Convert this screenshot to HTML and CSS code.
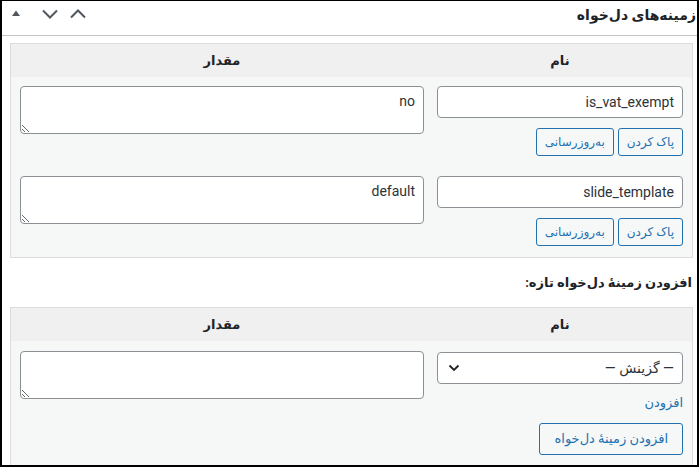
FILE: index.html
```html
<!DOCTYPE html>
<html lang="fa" dir="rtl">
<head>
<meta charset="utf-8">
<title>زمینه‌های دل‌خواه</title>
<link rel="stylesheet" href="styles.css">
</head>
<body>
<div class="postbox">
  <div class="postbox-header">
    <h2 class="hndle">زمینه‌های دل‌خواه</h2>
    <div class="handle-actions">
      <button class="handle-btn toggle" type="button" aria-label="toggle">
        <svg width="8" height="6" viewBox="0 0 8 6"><polygon points="0,6 4,0.5 8,6" fill="#50575e"/></svg>
      </button>
      <button class="handle-btn lower" type="button" aria-label="down">
        <svg width="16" height="10" viewBox="0 0 16 10"><polyline points="1,1.5 8,8.5 15,1.5" fill="none" stroke="#50575e" stroke-width="2"/></svg>
      </button>
      <button class="handle-btn higher" type="button" aria-label="up">
        <svg width="16" height="10" viewBox="0 0 16 10"><polyline points="1,8.5 8,1.5 15,8.5" fill="none" stroke="#50575e" stroke-width="2"/></svg>
      </button>
    </div>
  </div>

  <div class="inside">
    <div class="meta-table">
      <div class="meta-head">
        <div class="th">نام</div>
        <div class="th">مقدار</div>
      </div>
      <div class="meta-row">
        <div class="cell-name">
          <input class="text-input" type="text" value="is_vat_exempt">
          <div class="row-actions">
            <button class="btn" type="button">پاک کردن</button>
            <button class="btn" type="button">به‌روزرسانی</button>
          </div>
        </div>
        <div class="cell-value"><textarea class="textarea">no</textarea></div>
      </div>
      <div class="meta-row">
        <div class="cell-name">
          <input class="text-input" type="text" value="slide_template">
          <div class="row-actions">
            <button class="btn" type="button">پاک کردن</button>
            <button class="btn" type="button">به‌روزرسانی</button>
          </div>
        </div>
        <div class="cell-value"><textarea class="textarea">default</textarea></div>
      </div>
    </div>

    <p class="add-title">افزودن زمینهٔ دل‌خواه تازه:</p>

    <div class="meta-table">
      <div class="meta-head">
        <div class="th">نام</div>
        <div class="th">مقدار</div>
      </div>
      <div class="meta-row new-row">
        <div class="cell-name">
          <div class="select">
            <span class="select-text">— گزینش —</span>
            <svg class="select-arrow" width="12" height="8" viewBox="0 0 12 8"><polyline points="1.5,1.5 6,6 10.5,1.5" fill="none" stroke="#1d2327" stroke-width="1.8"/></svg>
          </div>
          <a class="add-link" href="#">افزودن</a>
          <button class="btn btn-large" type="button">افزودن زمینهٔ دل‌خواه</button>
        </div>
        <div class="cell-value"><textarea class="textarea"></textarea></div>
      </div>
    </div>
  </div>
</div>
</body>
</html>
```

FILE: styles.css
```css
html, body {
  margin: 0;
  padding: 0;
  background: #ffffff;
}

body {
  font-family: Roboto, "DejaVu Sans", sans-serif;
  font-size: 13px;
  color: #1d2327;
}

.postbox {
  box-sizing: border-box;
  width: 699px;
  height: 467px;
  overflow: hidden;
  border-style: solid;
  border-color: #000000;
  border-width: 1px 2px 2px 2px;
  background: #ffffff;
}

.postbox-header {
  display: flex;
  justify-content: space-between;
  align-items: flex-start;
  height: 34px;
  border-bottom: 1px solid #c3c4c7;
}

.hndle {
  margin: 4px 0 0 0;
  padding-right: 1px;
  font-size: 14px;
  font-weight: 700;
  line-height: 20px;
  color: #1d2327;
}

.handle-actions {
  display: flex;
  direction: ltr;
}

.handle-btn {
  width: 28px;
  height: 34px;
  padding: 0;
  margin: 0;
  border: 0;
  background: transparent;
  display: flex;
  justify-content: center;
  align-items: flex-start;
}

.handle-btn svg {
  display: block;
  margin-top: 8px;
}

.handle-btn.toggle svg {
  margin-top: 9px;
}

.handle-btn.lower {
  margin-left: 6px;
}

.inside {
  padding: 7px 4px 0 8px;
}

.meta-table {
  border: 1px solid #dcdcde;
  background: #f6f7f7;
}

.meta-head,
.meta-row {
  display: grid;
  grid-template-columns: 246px 1fr;
  column-gap: 13px;
  padding: 0 9px;
}

.meta-head {
  background: #f0f0f1;
  height: 33px;
  align-items: center;
}

.th {
  text-align: center;
  font-weight: 700;
  font-size: 13px;
  line-height: 20px;
}

.meta-row {
  padding-top: 9px;
  padding-bottom: 11px;
  align-items: start;
}

.cell-name {
  display: flex;
  flex-direction: column;
  align-items: flex-start;
}

.text-input {
  box-sizing: border-box;
  width: 246px;
  height: 32px;
  margin: 0;
  padding: 0 8px;
  border: 1px solid #8c8f94;
  border-radius: 4px;
  background: #ffffff;
  font-family: Roboto, "DejaVu Sans", sans-serif;
  font-size: 14px;
  color: #2c3338;
  direction: rtl;
  text-align: right;
}

.textarea {
  box-sizing: border-box;
  display: block;
  width: 100%;
  height: 48px;
  margin: 0;
  padding: 4px 8px;
  border: 1px solid #8c8f94;
  border-radius: 4px;
  background: #ffffff;
  font-family: Roboto, "DejaVu Sans", sans-serif;
  font-size: 14px;
  line-height: 20px;
  color: #2c3338;
  resize: vertical;
}

.row-actions {
  display: flex;
  gap: 4px;
  margin-top: 10px;
}

.btn {
  box-sizing: border-box;
  height: 28px;
  margin: 0;
  padding: 0 8px;
  border: 1px solid #2271b1;
  border-radius: 3px;
  background: #f6f7f7;
  color: #2271b1;
  font-family: Roboto, "DejaVu Sans", sans-serif;
  font-size: 12px;
  line-height: 26px;
  white-space: nowrap;
}

.btn-large {
  height: 32px;
  padding: 0 14px;
  font-size: 13px;
  line-height: 30px;
  margin-top: 10px;
}

.add-title {
  margin: 15px 0 14px 0;
  padding-right: 1px;
  font-weight: 700;
  font-size: 13px;
  line-height: 20px;
}

.new-row {
  padding-top: 10px;
}

.select {
  box-sizing: border-box;
  width: 246px;
  height: 32px;
  margin-top: 1px;
  padding: 0 8px 0 10px;
  border: 1px solid #8c8f94;
  border-radius: 4px;
  background: #ffffff;
  display: flex;
  justify-content: space-between;
  align-items: center;
  font-size: 14px;
  color: #2c3338;
}

.select-arrow {
  display: block;
}

.add-link {
  margin-top: 9px;
  color: #2271b1;
  text-decoration: none;
  font-size: 13px;
  line-height: 20px;
}
```
